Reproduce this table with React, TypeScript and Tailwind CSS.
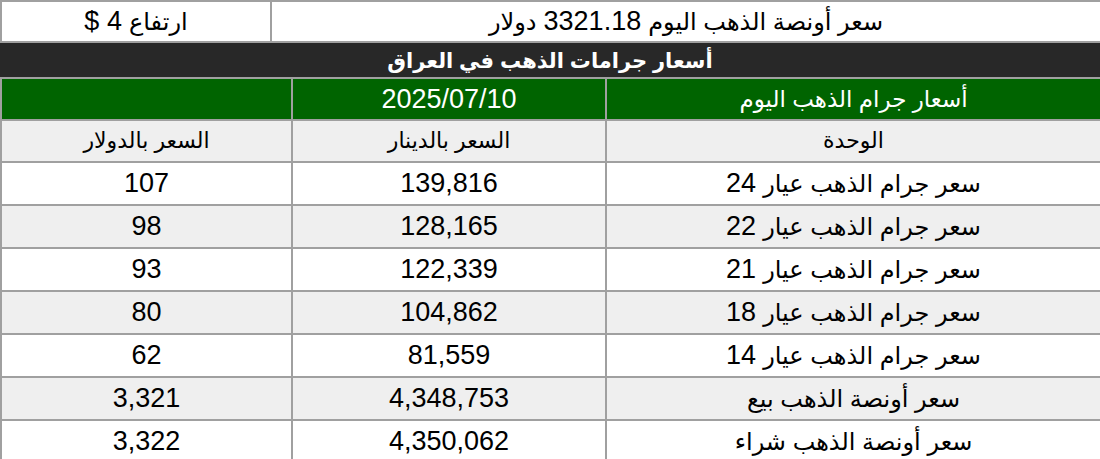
import React from "react";

const rows: [string, string, string, string][] = [
  ["سعر جرام الذهب عيار", "24", "139,816", "107"],
  ["سعر جرام الذهب عيار", "22", "128,165", "98"],
  ["سعر جرام الذهب عيار", "21", "122,339", "93"],
  ["سعر جرام الذهب عيار", "18", "104,862", "80"],
  ["سعر جرام الذهب عيار", "14", "81,559", "62"],
  ["سعر أونصة الذهب بيع", "", "4,348,753", "3,321"],
  ["سعر أونصة الذهب شراء", "", "4,350,062", "3,322"],
];

export default function App() {
  return (
    <div
      dir="rtl"
      className="w-[1100px] h-[459px] overflow-hidden bg-white text-black text-[27px] leading-none font-['Liberation_Sans','DejaVu_Sans',sans-serif]"
    >
      <div className="flex h-[43px] border-t-2 border-b-2 border-l-2 border-[#a0a0a0]">
        <div className="flex-1 flex items-center justify-center gap-[7px]">
          <span className="text-[24px]">سعر أونصة الذهب اليوم</span>
          <span>3321.18</span>
          <span className="text-[24px]">دولار</span>
        </div>
        <div className="w-[270px] flex items-center justify-center gap-[7px] border-r-2 border-[#a0a0a0]">
          <span className="text-[24px]">ارتفاع</span>
          <span>4 $</span>
        </div>
      </div>
      <div className="flex h-[36px] items-center justify-center bg-[#282828] border-b-2 border-[#a0a0a0] text-white font-bold text-[21px]">
        أسعار جرامات الذهب في العراق
      </div>
      <div className="flex h-[42px] bg-[#006400] text-white border-b-2 border-l-2 border-[#a0a0a0]">
        <div className="w-[495px] flex items-center justify-center border-l-2 border-[#a0a0a0] text-[23px]">
          أسعار جرام الذهب اليوم
        </div>
        <div className="w-[314px] flex items-center justify-center border-l-2 border-[#a0a0a0]">
          2025/07/10
        </div>
        <div className="flex-1" />
      </div>
      <div className="flex h-[42px] bg-[#efefef] border-b-2 border-l-2 border-[#a0a0a0] text-[22px]">
        <div className="w-[495px] flex items-center justify-center border-l-2 border-[#a0a0a0]">
          الوحدة
        </div>
        <div className="w-[314px] flex items-center justify-center border-l-2 border-[#a0a0a0]">
          السعر بالدينار
        </div>
        <div className="flex-1 flex items-center justify-center">السعر بالدولار</div>
      </div>
      {rows.map((r, i) => (
        <div
          key={i}
          className={
            "flex h-[43px] border-b-2 border-l-2 border-[#a0a0a0] " +
            (i % 2 === 1 ? "bg-[#efefef]" : "bg-white")
          }
        >
          <div className="w-[495px] flex items-center justify-center gap-[7px] border-l-2 border-[#a0a0a0]">
            <span className="text-[24px]">{r[0]}</span>
            {r[1] ? <span>{r[1]}</span> : null}
          </div>
          <div className="w-[314px] flex items-center justify-center border-l-2 border-[#a0a0a0]">
            {r[2]}
          </div>
          <div className="flex-1 flex items-center justify-center">{r[3]}</div>
        </div>
      ))}
    </div>
  );
}
